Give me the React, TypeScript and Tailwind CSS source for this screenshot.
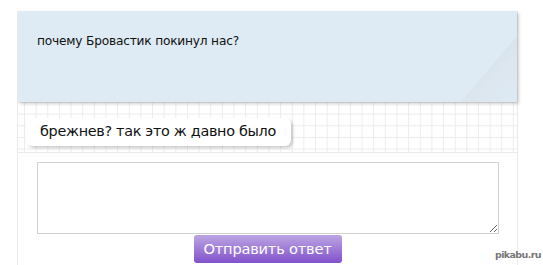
import React from 'react'

const App = () => {
  return (
    <div className="w-[543px] h-[265px] bg-white overflow-hidden relative" style={{ fontFamily: '"DejaVu Sans", Tahoma, sans-serif' }}>
      <div className="ml-[17px] mt-[11px] w-[501px] border-x border-[#ebebeb] h-[254px] flex flex-col">
        {/* question card */}
        <div className="relative h-[91px] bg-[#deeaf4] shadow-[2px_2px_3px_rgba(0,0,0,0.18)] z-10">
          <p className="pl-[19px] pt-[21px] text-[12.2px] text-[#111] tracking-[-0.2px]">почему Бровастик покинул нас?</p>
          <div className="absolute right-0 bottom-0 w-[56px] h-[66px] bg-[linear-gradient(135deg,#d0dde8_0%,#dbe6ef_60%,#deeaf4_100%)] [clip-path:polygon(100%_0,100%_100%,0_100%)]" />
        </div>

        {/* grid area with answer */}
        <div className="h-[51px] border-b border-[#ebebeb] bg-[linear-gradient(to_right,#ececec_1px,transparent_1px),linear-gradient(to_bottom,#ececec_1px,transparent_1px)] bg-[size:11.65px_11.65px] bg-[position:6px_0px] pt-[16px] pl-[8px]">
          <div className="inline-flex items-center h-[28px] pl-[14px] pr-[15px] bg-white rounded-[6px] shadow-[2px_2px_3px_rgba(0,0,0,0.2)] text-[14.4px] text-[#111] tracking-[-0.3px]">
            брежнев? так это ж давно было
          </div>
        </div>

        {/* reply form */}
        <div className="flex flex-col items-center pt-[9px]">
          <textarea className="w-[462px] h-[72px] border border-[#d2d2d2] bg-white resize-y outline-none" />
          <button className="mt-[1px] w-[148px] h-[28px] rounded-[3px] bg-[linear-gradient(to_bottom,#bca5e2,#8152cc)] text-white text-[14.6px] tracking-[-0.2px]">
            Отправить ответ
          </button>
        </div>
      </div>
      <div className="absolute right-[2px] bottom-[3px] text-[9.5px] font-bold text-[#777] tracking-[-0.6px] [text-shadow:0_0_1px_#fff,1px_1px_0_#fff]">pikabu.ru</div>
    </div>
  );
}

export default App
